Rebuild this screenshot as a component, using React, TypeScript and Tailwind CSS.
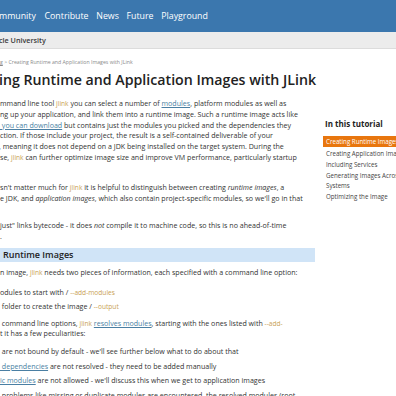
import React from "react";

const Code = ({ children }: { children: React.ReactNode }) => (
  <span className="text-[#c99f55] text-[6.6px]">{children}</span>
);
const A = ({ children }: { children: React.ReactNode }) => (
  <span className="text-[#4a7fa3] underline underline-offset-[1px]">{children}</span>
);

const Line = ({ children, className = "" }: { children?: React.ReactNode; className?: string }) => (
  <div className={"h-[10.75px] leading-[10.75px] whitespace-nowrap " + className}>{children}</div>
);

export default function App() {
  return (
    <div className="w-[396px] h-[396px] overflow-hidden bg-white font-['Open_Sans',sans-serif] text-[#333]">
      <nav className="h-[32px] bg-[#3b77ae] flex items-center pt-[2px] gap-[7.7px] text-white text-[8.8px] whitespace-nowrap">
        <span className="-ml-[1px]">mmunity</span>
        <span className="ml-[1px]">Contribute</span>
        <span>News</span>
        <span>Future</span>
        <span>Playground</span>
      </nav>
      <div className="h-[17px] bg-[#ececec] border-b border-[#dcdcdc] flex items-center pt-[1px] text-[7.2px] font-semibold text-[#3a3a3a] whitespace-nowrap">
        <span className="-ml-[1px]">cle University</span>
      </div>
      <div className="flex">
        <main className="w-[315px] shrink-0">
          <div className="mt-[9px] text-[5.2px] text-[#8a8a8a] whitespace-nowrap leading-[8px]">
            <span className="underline">g</span> &gt; Creating Runtime and Application Images with JLink
          </div>
          <h1 className="mt-[3.5px] text-[14.2px] font-semibold text-[#222] whitespace-nowrap leading-[20px] -ml-[1px]">
            ing Runtime and Application Images with JLink
          </h1>
          <div className="mt-[8.5px] text-[7.1px]">
            <Line>
              mmand line tool <Code>jlink</Code> you can select a number of <A>modules</A>, platform modules as well as
            </Line>
            <Line>ng up your application, and link them into a runtime image. Such a runtime image acts like</Line>
            <Line>
              <A>&nbsp;you can download</A> but contains just the modules you picked and the dependencies they
            </Line>
            <Line>ction. If those include your project, the result is a self-contained deliverable of your</Line>
            <Line className="-ml-[1px]">, meaning it does not depend on a JDK being installed on the target system. During the</Line>
            <Line>
              se, <Code>jlink</Code> can further optimize image size and improve VM performance, particularly startup
            </Line>
            <Line />
          </div>
          <div className="mt-[8.5px] text-[7.1px]">
            <Line>
              sn't matter much for <Code>jlink</Code> it is helpful to distinguish between creating <em>runtime images</em>, a
            </Line>
            <Line>
              e JDK, and <em>application images</em>, which also contain project-specific modules, so we'll go in that
            </Line>
          </div>
          <div className="mt-[17px] text-[7.1px]">
            <Line>
              just" links bytecode - it does <em>not</em> compile it to machine code, so this is no ahead-of-time
            </Line>
            <Line>.</Line>
          </div>
          <div className="mt-[6.5px] h-[13.5px] bg-[#d0e4f7] flex items-center text-[9px] font-semibold text-[#222] whitespace-nowrap">
            <span className="ml-[3px]">Runtime Images</span>
          </div>
          <div className="mt-[5.5px] text-[7.1px]">
            <Line>
              n image, <Code>jlink</Code> needs two pieces of information, each specified with a command line option:
            </Line>
          </div>
          <div className="mt-[8.5px] text-[7.1px] flex flex-col gap-[3.6px]">
            <Line>
              odules to start with / <Code>--add-modules</Code>
            </Line>
            <Line>
              &nbsp;folder to create the image / <Code>--output</Code>
            </Line>
          </div>
          <div className="mt-[6px] text-[7.1px]">
            <Line>
              &nbsp;command line options, <Code>jlink</Code> <A>resolves modules</A>, starting with the ones listed with <Code>--add-</Code>
            </Line>
            <Line>t it has a few peculiarities:</Line>
          </div>
          <div className="mt-[6.5px] text-[7.1px] flex flex-col gap-[4.2px]">
            <Line>&nbsp;are not bound by default - we'll see further below what to do about that</Line>
            <Line>
              <A>&nbsp;dependencies</A> are not resolved - they need to be added manually
            </Line>
            <Line>
              <A>ic modules</A> are not allowed - we'll discuss this when we get to application images
            </Line>
            <Line>&nbsp;problems like missing or duplicate modules are encountered, the resolved modules (root</Line>
          </div>
        </main>
        <aside className="ml-[8px] flex-1 min-w-0 whitespace-nowrap overflow-hidden">
          <div className="mt-[69px] ml-[2px] text-[8px] font-bold text-[#222] leading-[12px]">In this tutorial</div>
          <div className="mt-[6px] text-[6.2px] text-[#444]">
            <div className="h-[10.5px] bg-[#e8760e] text-white flex items-center pl-[3px]">Creating Runtime Images</div>
            <div className="mt-[1.5px] h-[11px] flex items-center pl-[3px]">Creating Application Images</div>
            <div className="h-[11px] flex items-center pl-[3px]">Including Services</div>
            <div className="pl-[3px] leading-[9.6px] mt-[1px]">
              Generating Images Across
              <br />
              Systems
            </div>
            <div className="h-[13px] flex items-center pl-[3px]">Optimizing the Image</div>
          </div>
        </aside>
      </div>
    </div>
  );
}
